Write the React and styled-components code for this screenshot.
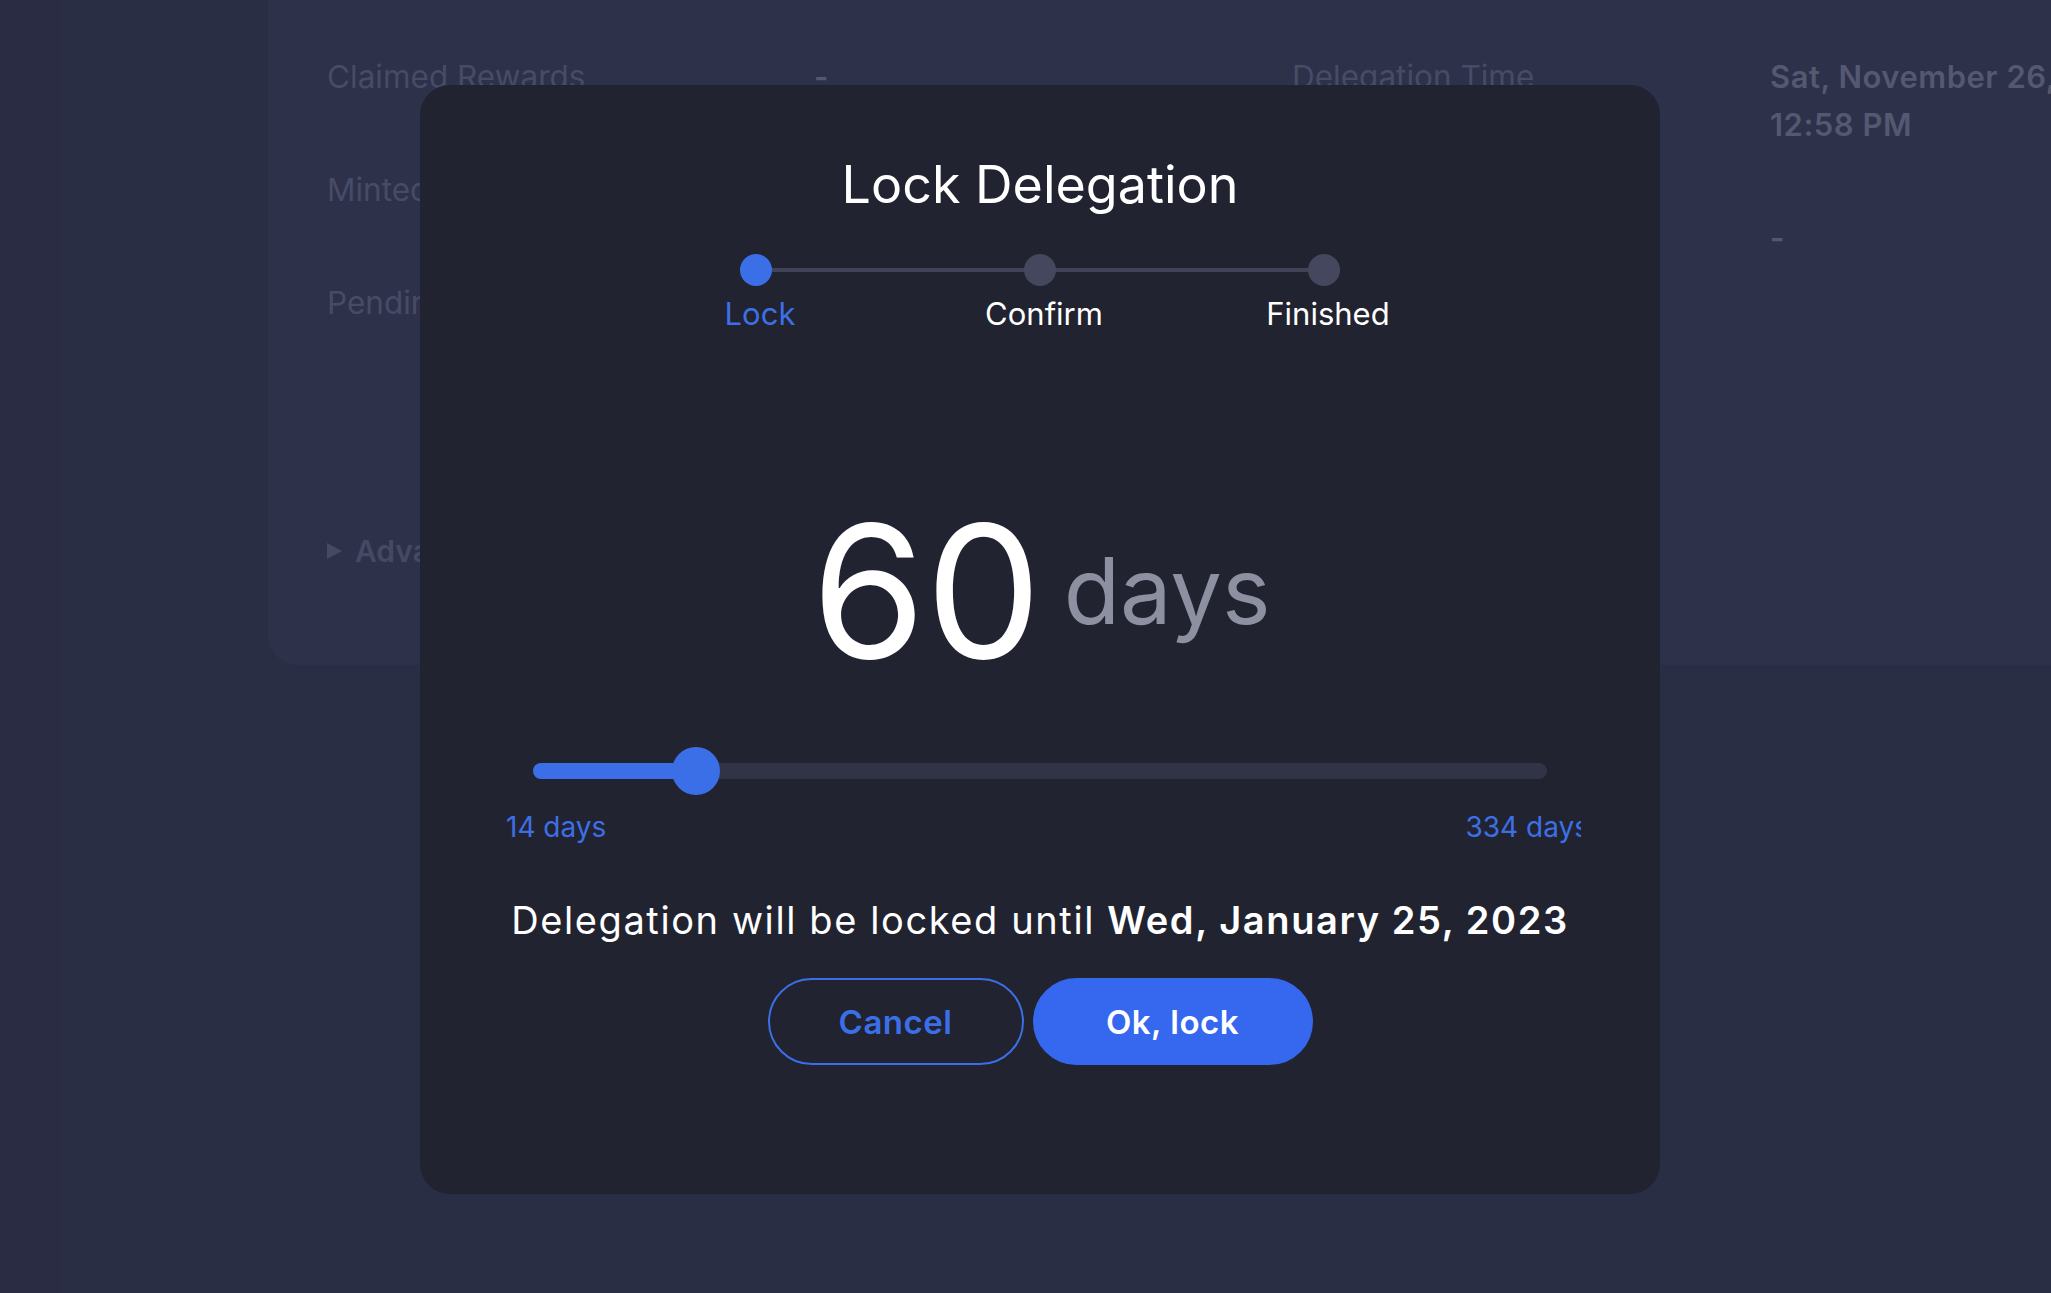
import React from 'react';
import styled, { createGlobalStyle } from 'styled-components';

const GlobalStyle = createGlobalStyle`
  html, body {
    margin: 0;
    padding: 0;
    height: 100%;
    overflow: hidden;
    background: #2a2e44;
    font-family: Inter, 'Liberation Sans', sans-serif;
  }
  * { box-sizing: border-box; }
`;

const Page = styled.div`
  display: flex;
  width: 100vw;
  height: 100vh;
  background: #2a2e44;
`;

const SideStrip = styled.div`
  flex: 0 0 60px;
  background: #292c42;
`;

const Main = styled.div`
  flex: 1;
  padding-left: 208px;
  overflow: hidden;
`;

const Card = styled.section`
  height: 665px;
  background: #2d314a;
  border-bottom-left-radius: 30px;
  padding: 53px 0 0 59px;
`;

const Columns = styled.div`
  display: grid;
  grid-template-columns: 965px 1fr;
  align-items: start;
`;

const DetailList = styled.dl`
  display: grid;
  grid-template-columns: ${({ labelWidth }) => labelWidth}px 1fr;
  align-content: start;
  row-gap: 65px;
  margin: 0;
  font-size: 31.5px;
  line-height: 48px;
`;

const Label = styled.dt`
  color: #474c66;
  white-space: nowrap;
`;

const Value = styled.dd`
  margin: 0 0 0 -2px;
  color: #545971;
  font-size: 31px;
  font-weight: 600;
  letter-spacing: 0.5px;
  white-space: nowrap;
`;

const Advanced = styled.div`
  display: flex;
  align-items: center;
  gap: 13px;
  margin-top: 200px;
  font-size: 30px;
  line-height: 48px;
  font-weight: 600;
  color: #454a64;

  &::before {
    content: '';
    width: 0;
    height: 0;
    border-top: 8px solid transparent;
    border-bottom: 8px solid transparent;
    border-left: 15px solid #454a64;
  }
`;

const Overlay = styled.div`
  position: fixed;
  inset: 0;
  padding: 85px 0 0 420px;
`;

const Modal = styled.div`
  width: 1240px;
  height: 1109px;
  background: #212330;
  border-radius: 30px;
  display: flex;
  flex-direction: column;
  align-items: center;
  padding-top: 74px;
  color: #fff;
`;

const Title = styled.h2`
  margin: 0;
  font-size: 52px;
  line-height: 52px;
  font-weight: 400;
  color: #fff;
`;

const Stepper = styled.ol`
  position: relative;
  display: grid;
  grid-template-columns: repeat(3, 284px);
  margin: 43px 0 0;
  padding: 0;
  list-style: none;
`;

const Connector = styled.span`
  position: absolute;
  left: 142px;
  right: 142px;
  top: 14px;
  height: 4px;
  background: #424358;
`;

const Step = styled.li`
  position: relative;
  display: flex;
  flex-direction: column;
  align-items: center;
  gap: 10px;
  font-size: 31px;
  line-height: 36px;
  color: ${({ active }) => (active ? '#3d6fe6' : '#fff')};
`;

const StepLabel = styled.span`
  padding-left: 8px;
`;

const Dot = styled.span`
  width: 32px;
  height: 32px;
  border-radius: 50%;
  background: ${({ active }) => (active ? '#3b6fe8' : '#45475e')};
`;

const Amount = styled.div`
  display: flex;
  align-items: center;
  gap: 22px;
  margin-top: 167px;
  margin-left: 2px;
`;

const Number = styled.span`
  font-size: 184px;
  line-height: 184px;
  font-weight: 400;
  color: #fff;
`;

const Unit = styled.span`
  font-size: 92px;
  line-height: 92px;
  color: #8c90a0;
`;

const Slider = styled.div`
  position: relative;
  width: 1014px;
  height: 48px;
  margin-top: 64px;
  display: flex;
  align-items: center;
`;

const Track = styled.div`
  width: 100%;
  height: 16px;
  border-radius: 8px;
  background: #313347;
  overflow: hidden;
`;

const Fill = styled.div`
  height: 100%;
  background: #3b6fe8;
`;

const Thumb = styled.div`
  position: absolute;
  top: 0;
  width: 48px;
  height: 48px;
  margin-left: -24px;
  border-radius: 50%;
  background: #3b6fe8;
`;

const RangeLabels = styled.div`
  display: flex;
  justify-content: space-between;
  width: 1075px;
  margin: 15px 0 0 7px;
  overflow: hidden;
  font-size: 28px;
  line-height: 34px;
  color: #3d6fe6;
`;

const RangeEnd = styled.span`
  white-space: nowrap;
  margin-right: ${({ clip }) => (clip ? '-8px' : '0')};
`;

const Sentence = styled.p`
  margin: 52px 0 0;
  font-size: 38px;
  line-height: 48px;
  letter-spacing: 1.6px;
  color: #fff;

  strong {
    font-weight: 600;
  }
`;

const Actions = styled.div`
  display: flex;
  gap: 9px;
  margin-top: 34px;
`;

const Button = styled.button`
  height: 87px;
  width: ${({ primary }) => (primary ? '280px' : '256px')};
  border-radius: 44px;
  border: 2px solid;
  border-color: ${({ primary }) => (primary ? '#3568ee' : '#3b6fe8')};
  background: ${({ primary }) => (primary ? '#3568ee' : 'transparent')};
  color: ${({ primary }) => (primary ? '#fff' : '#3b6fe8')};
  font-family: inherit;
  font-size: 33px;
  font-weight: 600;
  letter-spacing: 0.5px;
  cursor: pointer;
`;

const steps = ['Lock', 'Confirm', 'Finished'];

const range = { min: 14, max: 334, value: 60, width: 1014, thumb: 48 };

const App = () => {
  const ratio = (range.value - range.min) / (range.max - range.min);
  const thumbCenter = range.thumb / 2 + ratio * (range.width - range.thumb);

  return (
    <>
      <GlobalStyle />
      <Page>
        <SideStrip />
        <Main>
          <Card>
            <Columns>
              <DetailList labelWidth={489}>
                <Label>Claimed Rewards</Label>
                <Value>-</Value>
                <Label>Minted Rewards</Label>
                <Value>-</Value>
                <Label>Pending Rewards</Label>
                <Value>-</Value>
              </DetailList>
              <DetailList labelWidth={480}>
                <Label>Delegation Time</Label>
                <Value>
                  Sat, November 26, 2022
                  <br />
                  12:58 PM
                </Value>
                <Label>Unlock Time</Label>
                <Value>-</Value>
              </DetailList>
            </Columns>
            <Advanced>Advanced</Advanced>
          </Card>
        </Main>
      </Page>
      <Overlay>
        <Modal>
          <Title>Lock Delegation</Title>
          <Stepper>
            <Connector />
            {steps.map((step, i) => (
              <Step key={step} active={i === 0}>
                <Dot active={i === 0} />
                <StepLabel>{step}</StepLabel>
              </Step>
            ))}
          </Stepper>
          <Amount>
            <Number>{range.value}</Number>
            <Unit>days</Unit>
          </Amount>
          <Slider>
            <Track>
              <Fill style={{ width: `${thumbCenter}px` }} />
            </Track>
            <Thumb style={{ left: `${thumbCenter}px` }} />
          </Slider>
          <RangeLabels>
            <RangeEnd>{range.min} days</RangeEnd>
            <RangeEnd clip>{range.max} days</RangeEnd>
          </RangeLabels>
          <Sentence>
            Delegation will be locked until <strong>Wed, January 25, 2023</strong>
          </Sentence>
          <Actions>
            <Button>Cancel</Button>
            <Button primary>Ok, lock</Button>
          </Actions>
        </Modal>
      </Overlay>
    </>
  );
};

export default App;
